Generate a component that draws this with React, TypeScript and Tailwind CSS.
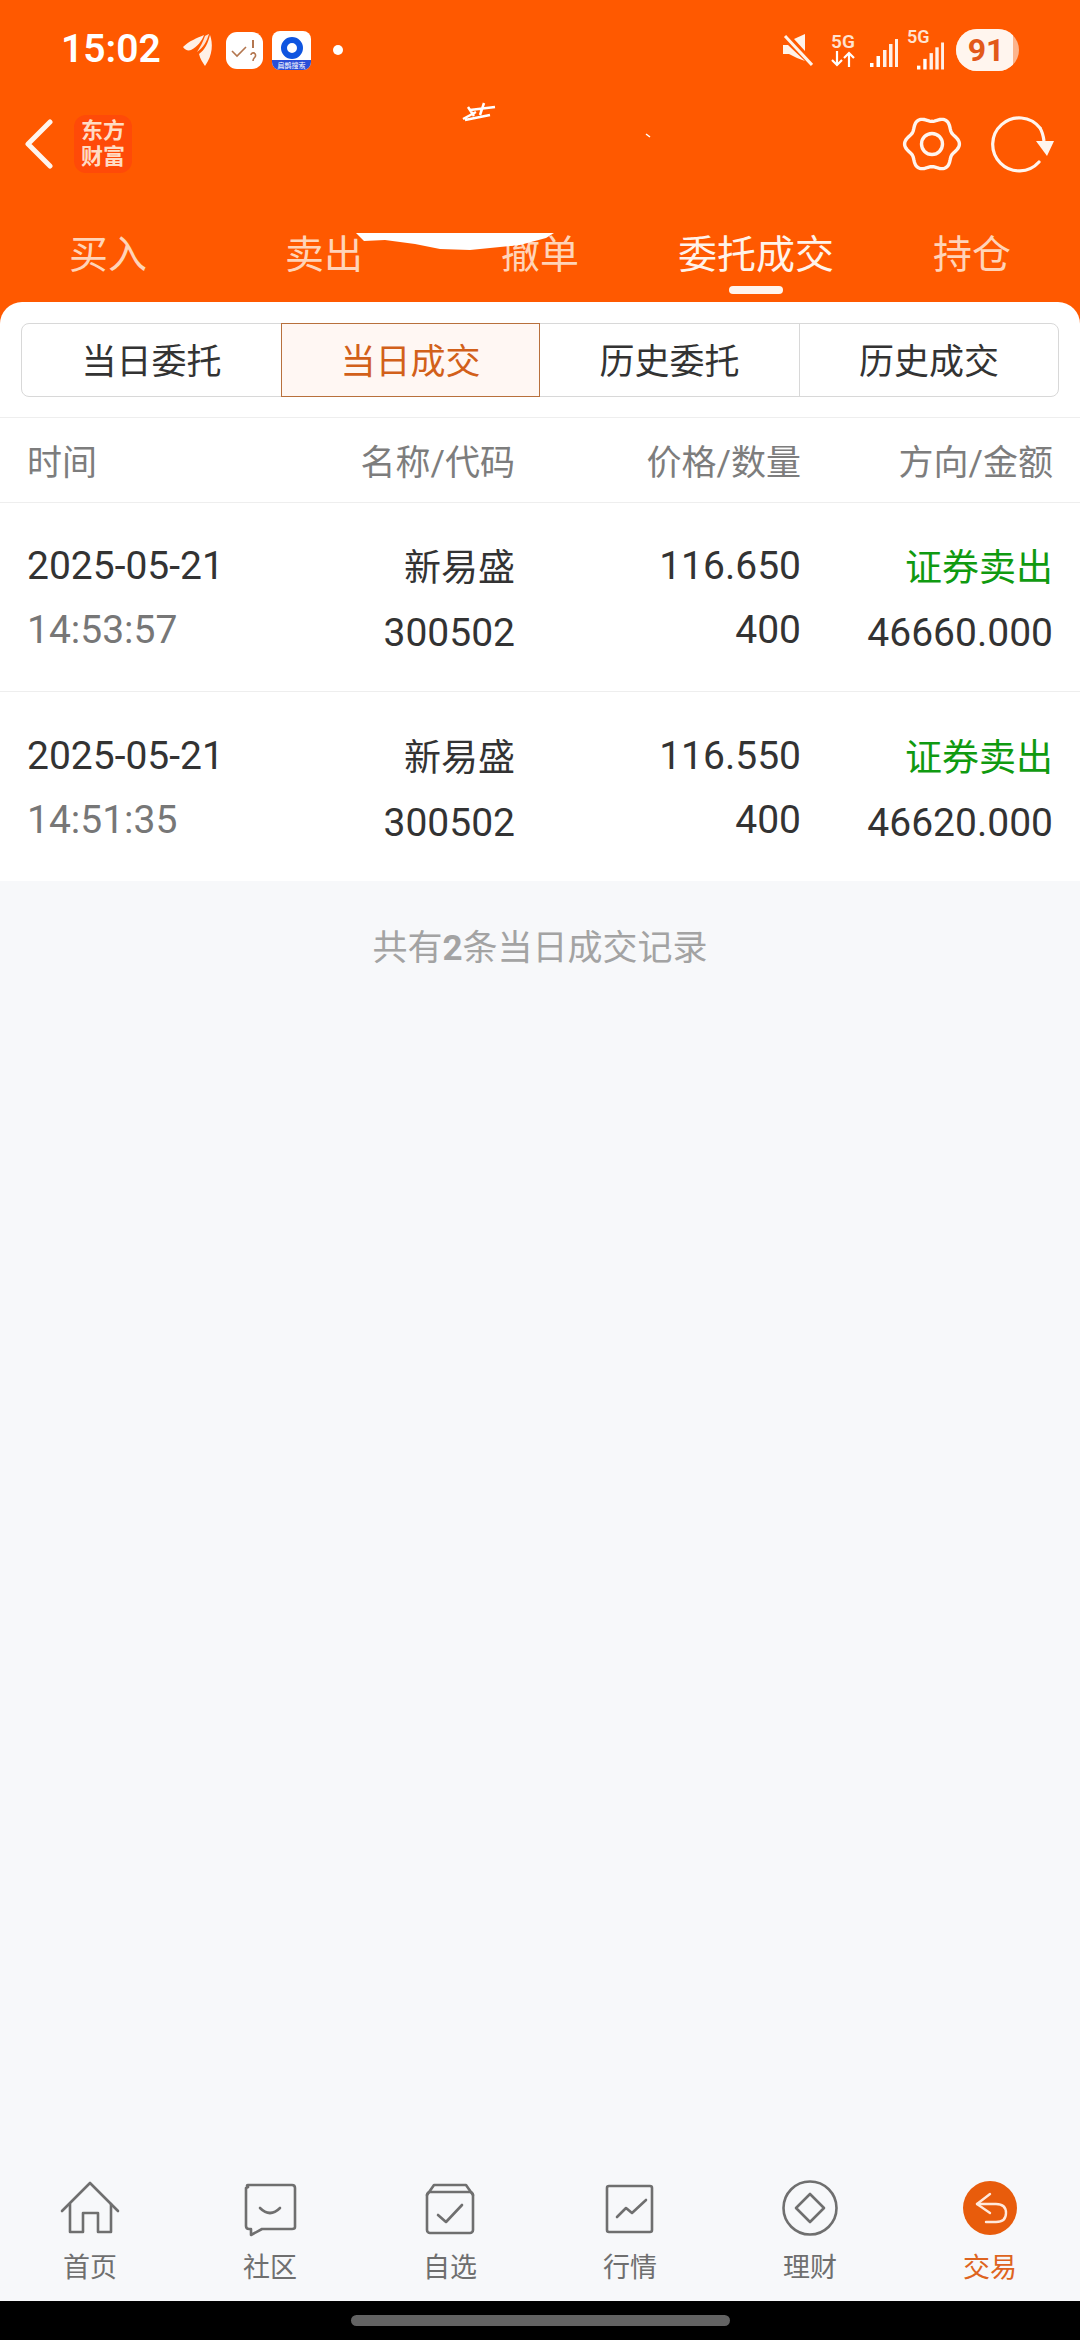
import React from "react";

const FONT = "font-['Roboto','Noto_Sans_CJK_SC',sans-serif]";

function gearPath() {
  const pts: string[] = [];
  for (let i = 0; i <= 120; i++) {
    const t = (i / 120) * Math.PI * 2;
    const r = 25 + 2.4 * Math.cos(6 * t);
    pts.push(`${(30 + r * Math.cos(t)).toFixed(2)},${(30 + r * Math.sin(t)).toFixed(2)}`);
  }
  return "M" + pts.join("L") + "Z";
}

function Signal({ className }: { className?: string }) {
  return (
    <svg viewBox="0 0 28 30" className={className} fill="white">
      <rect x="0" y="25" width="3.500" height="4" />
      <rect x="6.500" y="18" width="3.500" height="11" />
      <rect x="13" y="12" width="3.500" height="17" opacity="0.9" />
      <rect x="19" y="6" width="3.500" height="23" opacity="0.9" />
      <rect x="25" y="1" width="3" height="28" opacity="0.9" />
    </svg>
  );
}

function StatusBar() {
  return (
    <div className="h-[100px] flex items-center pl-[61px] pr-[61px] text-white">
      <span className="text-[39px] leading-none font-semibold font-['Roboto',sans-serif] w-[120px] -mt-[2px]">15:02</span>
      <svg viewBox="0 0 30 34" className="w-[30px] h-[34px] ml-[2px]" fill="#fff0e6">
        <path d="M0 14 C6 8 14 5 21 2 C19 8 14 14 8 17 C5 18 2 17 0 14Z" />
        <path d="M22 3 C24 2 25 1 26 1 C24 8 20 15 14 19 C17 14 20 9 22 3Z" opacity="0.9" />
        <path d="M27 2 C30 10 30 22 22 33 C20 30 17 26 16 21 C22 17 25 10 27 2Z" />
      </svg>
      <div className="w-[37px] h-[37px] ml-[13px] rounded-[11px] bg-white flex items-center justify-center">
        <svg viewBox="0 0 37 37" className="w-[37px] h-[37px]" fill="none" stroke="#b3764f" strokeWidth="1.600">
          <path d="M6 19 L11 24 L20 15" />
          <path d="M27 8 V16" strokeWidth="2" />
          <path d="M25 23 C25 20 30 20 29.500 24 C29 26 27 26 27 29" />
        </svg>
      </div>
      <div className="w-[39px] h-[39px] ml-[9px] rounded-[8px] bg-white overflow-hidden flex flex-col items-center relative">
        <div className="mt-[6px] w-[22px] h-[22px] rounded-full border-[6px] border-[#0f55e0]" />
        <div className="absolute bottom-0 left-0 right-0 h-[10px] bg-[#2b4fd8] text-white text-[7px] leading-[10px] text-center font-['Noto_Sans_CJK_SC',sans-serif]">
          扁鹊搜索
        </div>
      </div>
      <div className="w-[10px] h-[10px] rounded-full bg-white ml-[22px]" />
      <div className="flex-1" />
      <svg viewBox="0 0 30 32" className="w-[30px] h-[32px]" fill="#fff3ea">
        <path d="M0 11 H5 L22 27 L14 24 L6 20 H0Z" />
        <path d="M11 5 L22 0 V17Z" />
        <path d="M2 2 L29 31" stroke="#fff3ea" strokeWidth="3" />
      </svg>
      <div className="w-[26px] ml-[17px] flex flex-col items-center">
        <span className="text-[19px] leading-[18px] font-semibold font-['Roboto',sans-serif] text-[#ffe3d0]">5G</span>
        <svg viewBox="0 0 24 16" className="w-[24px] h-[16px]" fill="none" stroke="#fff" strokeWidth="2.200">
          <path d="M6 0 V14 M1 9 L6 14 L11 9" />
          <path d="M18 16 V2 M13 7 L18 2 L23 7" />
        </svg>
      </div>
      <Signal className="w-[28px] h-[30px] ml-[14px] mt-[6px]" />
      <div className="relative w-[37px] h-[40px] ml-[9px]">
        <span className="absolute left-0 top-[-2px] text-[18px] leading-[18px] font-semibold font-['Roboto',sans-serif] text-[#ffe3d0]">5G</span>
        <Signal className="absolute right-0 bottom-[-1px] w-[27px] h-[30px]" />
      </div>
      <div className="ml-[12px] w-[63px] h-[42px] rounded-[21px] overflow-hidden flex bg-[#fcb48c]">
        <div className="w-[57px] h-full bg-[#fff5ee] flex items-center justify-center pl-[3px]">
          <span className="text-[32px] leading-none font-bold font-['Roboto',sans-serif] text-[#e2591a]">91</span>
        </div>
      </div>
    </div>
  );
}

function Header() {
  return (
    <div className="h-[88px] flex items-center pl-[24px] text-white">
      <svg viewBox="0 0 30 50" className="w-[30px] h-[50px]" fill="none" stroke="#fff5ee" strokeWidth="5" strokeLinecap="round" strokeLinejoin="round">
        <path d="M26 3 L4 25 L26 47" />
      </svg>
      <div className={`ml-[20px] w-[58px] h-[58px] rounded-[12px] bg-[#ff4a08] flex items-center justify-center text-center text-[22px] leading-[26px] font-bold text-[#ffdcc4] ${FONT}`}>
        东方
        <br />
        财富
      </div>
      <div className="flex-1" />
      <svg viewBox="0 0 60 60" className="w-[60px] h-[60px]" fill="none" stroke="#fff5ee" strokeWidth="3.400">
        <path d={gearPath()} strokeLinejoin="round" />
        <circle cx="30" cy="30" r="10.500" />
      </svg>
      <svg viewBox="0 0 66 60" className="w-[66px] h-[60px] ml-[28px] mr-[24px]" fill="none" stroke="#fff5ee" strokeWidth="3.200">
        <path d="M50 14 A26.500 26.500 0 1 0 49 48" strokeLinecap="round" />
        <path d="M46 27 L64 27 L57 42Z" fill="#fff5ee" stroke="none" />
        <path d="M50 14 Q53 19 54 27" />
      </svg>
    </div>
  );
}

function Tabs() {
  const tabs = ["买入", "卖出", "撤单", "委托成交", "持仓"];
  return (
    <div className={`grid grid-cols-5 h-[114px] pt-[42px] ${FONT}`}>
      {tabs.map((t, i) => (
        <div key={t} className="flex flex-col items-center">
          <span className={`text-[39px] leading-[50px] ${i === 3 ? "text-[#fff3ea]" : "text-[#ffd4b8]"}`}>{t}</span>
          {i === 3 && <div className="mt-[6px] w-[54px] h-[8px] rounded-full bg-[#fff5ee]" />}
        </div>
      ))}
    </div>
  );
}

function Segment() {
  const items = ["当日委托", "当日成交", "历史委托", "历史成交"];
  return (
    <div className={`mx-[21px] h-[74px] grid grid-cols-4 rounded-[8px] border border-[#d8d8d8] ${FONT}`}>
      {items.map((t, i) => (
        <div
          key={t}
          className={`flex items-center justify-center text-[35px] pt-[7px] ${
            i === 1
              ? "-my-px border border-[#b8703c] bg-[#fff7f3] text-[#d2601a]"
              : i === 3
                ? "border-l border-[#d8d8d8] text-[#333333]"
                : "text-[#333333]"
          }`}
        >
          {t}
        </div>
      ))}
    </div>
  );
}

const COLS = "grid grid-cols-[200px_288px_286px_252px] mx-[27px]";

function TableHead() {
  return (
    <div className="border-y border-[#eeeeee] h-[86px] flex items-center">
      <div className={`${COLS} flex-1 pt-[8px] text-[35px] leading-[40px] text-[#7d7d7d] ${FONT}`}>
        <span>时间</span>
        <span className="text-right">名称/代码</span>
        <span className="text-right">价格/数量</span>
        <span className="text-right">方向/金额</span>
      </div>
    </div>
  );
}

function Row({ d, t, p, a, last }: { d: string; t: string; p: string; a: string; last?: boolean }) {
  return (
    <div className={`h-[189px] flex items-center ${last ? "" : "border-b border-[#eeeeee]"} ${FONT}`}>
      <div className={`${COLS} flex-1 pt-[5px] text-[39px] leading-[64px] text-[#333333]`}>
        <div className="flex flex-col whitespace-nowrap">
          <span>{d}</span>
          <span className="text-[#777777]">{t}</span>
        </div>
        <div className="flex flex-col items-end pt-[3px]">
          <span className="text-[37px]">新易盛</span>
          <span>300502</span>
        </div>
        <div className="flex flex-col items-end">
          <span>{p}</span>
          <span>400</span>
        </div>
        <div className="flex flex-col items-end pt-[3px]">
          <span className="text-[37px] text-[#109a10]">证券卖出</span>
          <span>{a}</span>
        </div>
      </div>
    </div>
  );
}

function NavItem({ label, active, children }: { label: string; active?: boolean; children: React.ReactNode }) {
  return (
    <div className="flex flex-col items-center">
      <div className="w-[60px] h-[60px]">{children}</div>
      <span className={`mt-[11px] text-[27px] leading-[34px] ${active ? "text-[#de6420]" : "text-[#6f6f6f]"}`}>{label}</span>
    </div>
  );
}

const icon = { viewBox: "0 0 60 60", fill: "none", stroke: "#6f6f6f", strokeWidth: 2.6, className: "w-[60px] h-[60px]", strokeLinejoin: "round" as const, strokeLinecap: "round" as const };

function BottomNav() {
  return (
    <div className={`grid grid-cols-6 h-[121px] ${FONT}`}>
      <NavItem label="首页">
        <svg {...icon}>
          <path d="M2 31 L30 3 L58 31" />
          <path d="M10 24 V52 H23 V33 H38 V52 H51 V24" />
        </svg>
      </NavItem>
      <NavItem label="社区">
        <svg {...icon}>
          <path d="M8 7 Q6 5 8 5 H52 Q55 5 55 8 V47 Q55 49 52 49 H22 L11 55 V49 H9 Q6 49 6 46 V8Z" />
          <path d="M20 28 Q30 38 40 28" />
        </svg>
      </NavItem>
      <NavItem label="自选">
        <svg {...icon}>
          <rect x="7" y="12" width="46" height="41" rx="3" />
          <path d="M7 15 L14 5 H46 L53 15" />
          <path d="M18 35 L26 42 L42 25" />
        </svg>
      </NavItem>
      <NavItem label="行情">
        <svg {...icon}>
          <rect x="7" y="6" width="45" height="46" rx="2" />
          <path d="M17 37 L26 28 L32 33 L46 20" />
        </svg>
      </NavItem>
      <NavItem label="理财">
        <svg {...icon} viewBox="0 0 60 60" className="w-[60px] h-[60px] overflow-visible">
          <circle cx="30" cy="28" r="26.500" />
          <path d="M30 14 L44 28 L30 42 L16 28Z" />
        </svg>
      </NavItem>
      <NavItem label="交易" active>
        <svg viewBox="0 0 60 60" className="w-[60px] h-[60px] overflow-visible" fill="none" stroke="#ffe9dc" strokeWidth="2.400" strokeLinecap="round" strokeLinejoin="round">
          <circle cx="30" cy="28" r="27" fill="#e85c0c" stroke="none" />
          <path d="M30 14 L17 24 L30 33" />
          <path d="M17 24 H36 Q46 24 46 33 Q46 42 36 42 H26" />
        </svg>
      </NavItem>
    </div>
  );
}

export default function App() {
  return (
    <div className="relative w-[1080px] h-[2340px] flex flex-col bg-[#f7f8fa] overflow-hidden">
      <div className="bg-[#ff5900]">
        <StatusBar />
        <Header />
        <Tabs />
        <div className="bg-white rounded-t-[22px]">
          <div className="pt-[21px] pb-[20px]">
            <Segment />
          </div>
          <TableHead />
          <Row d="2025-05-21" t="14:53:57" p="116.650" a="46660.000" />
          <Row d="2025-05-21" t="14:51:35" p="116.550" a="46620.000" last />
        </div>
      </div>
      <div className={`pt-[46px] text-center text-[35px] leading-[44px] text-[#a3a3a3] ${FONT}`}>
        共有<span className="font-bold">2</span>条当日成交记录
      </div>
      <div className="flex-1" />
      <BottomNav />
      <div className="h-[39px] bg-black flex justify-center pt-[14px]">
        <div className="w-[379px] h-[11px] rounded-full bg-[#636363]" />
      </div>

      {/* white scribbles lying over the picture */}
      <svg viewBox="0 0 1080 300" className="absolute left-0 top-0 w-[1080px] h-[300px] pointer-events-none" fill="#ffffff">
        <path d="M356 233 L554 233 L546 238 L520 245 L470 250 L440 249 L415 244 L385 240 L364 241Z" />
        <path d="M463 119 L476 112 M468 107 L474 116 M484 103 L480 115 M470 110 L495 107 M465 120 L490 115" stroke="#ffffff" strokeWidth="2.500" fill="none" />
        <path d="M646 134 L650 137" stroke="#ffffff" strokeWidth="1.500" fill="none" />
      </svg>
    </div>
  );
}
